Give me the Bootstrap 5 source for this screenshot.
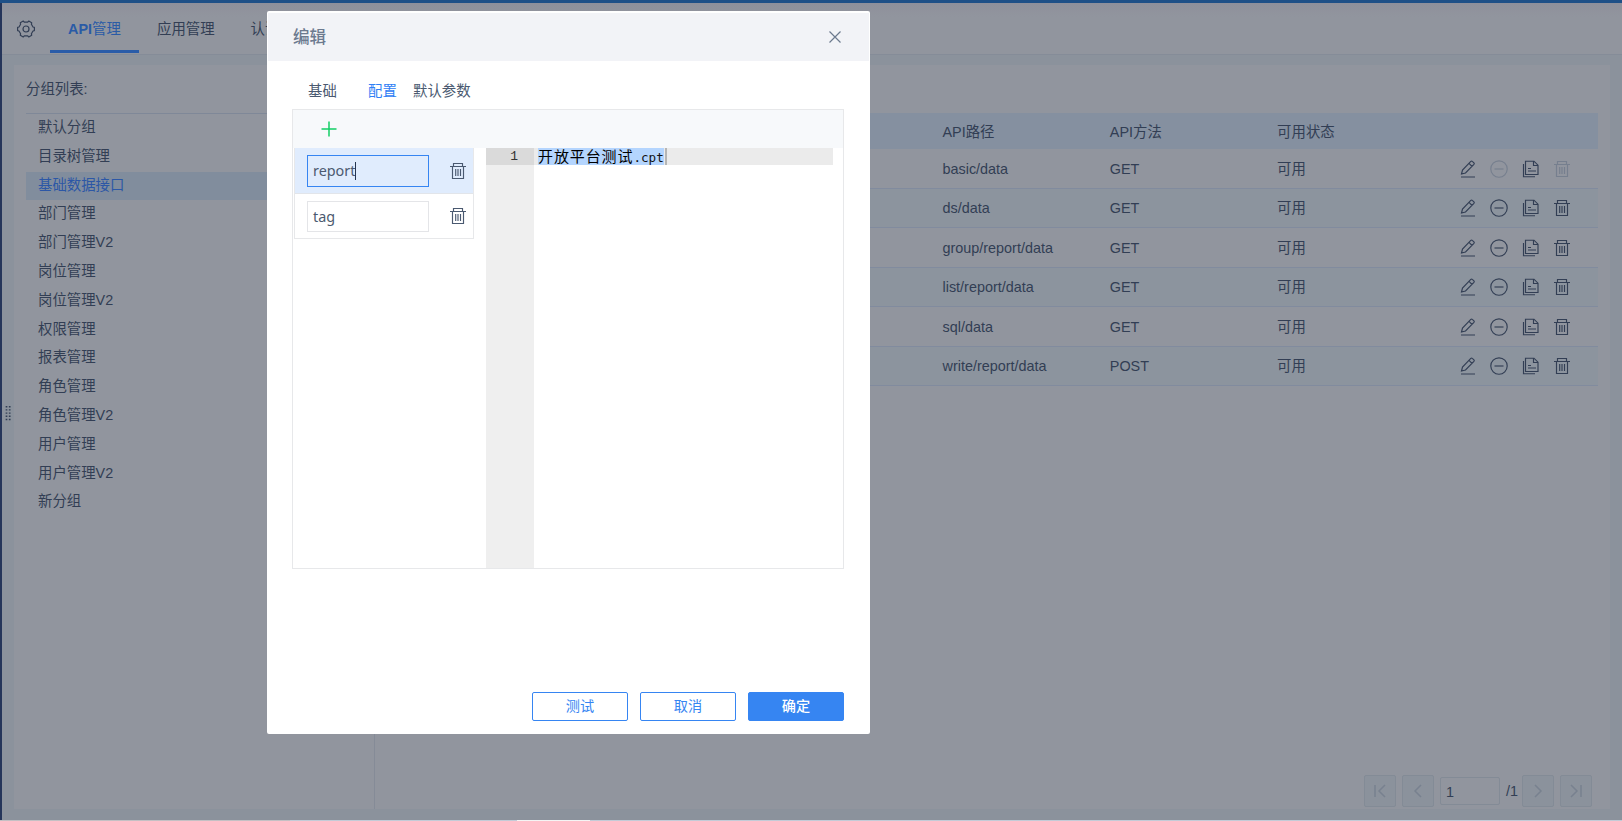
<!DOCTYPE html>
<html lang="zh-CN">
<head>
<meta charset="utf-8">
<title>API管理</title>
<link href="https://cdn.jsdelivr.net/npm/bootstrap@5.3.0/dist/css/bootstrap.min.css" rel="stylesheet">
<style>
:root{--ink:#323e54;--panel:#91959e;--page:#8b929c;--line:#818b9e;--blue:#3685f2}
body{font:14.4px/20px "Liberation Sans","Noto Sans CJK SC",sans-serif;color:var(--ink);background:var(--page);height:821px;overflow:hidden}
svg{display:block;fill:none;stroke:currentColor;flex:none}
.topline{height:3px;background:#1f5087}
.shell{height:817px;border-left:2px solid #25355a}
.topnav{height:52px;border-bottom:1px solid #858c98;background:linear-gradient(#8f909b,var(--panel) 14px);padding-left:15px}
.gear{margin:17px 15px 0 0}
.topnav a{color:var(--ink);text-decoration:none;height:50px;padding:16px 18px 0;white-space:nowrap}
.topnav a.on{color:#2a5ba6;border-bottom:3px solid #2a5ca8;width:89px}
.handle{width:12px;padding:0 0 38px 3px}
.panel{background:var(--panel);height:744px;margin-top:10px;width:1596px}
.side{width:361px;border-right:1px solid #858b97;padding-left:12px}
.side-title{height:49px;padding-top:14px;border-bottom:1px solid #7f8898;white-space:nowrap}
.side-item{height:28.8px;line-height:27.4px;padding-left:12px}
.side-item.on{background:#818d9d;color:#2c57a6}
.tbl{margin:48px 12px 0 12px}
.tr0{height:39.5px;border-bottom:1px solid var(--line);padding:1px 28px 0 555.5px}
.tr0:nth-child(odd){background:#8c949e}
.tr0.th0{height:36px;background:#8590a0;border:0;padding-top:2px}
.c1,.c2{width:167.3px}
.dim{color:#767f8e}
.ops{gap:14px}
.ops svg,.list0 svg{stroke-width:1.15}
.pager{gap:6px;padding:0 18px 2px 0;color:#78818f}
.pg{width:32px;height:32px;border:1px solid #838b96;background:#8b929c;border-radius:2px}
.pg-in{width:60px;height:28px;border:1px solid #838b96;border-radius:2px;color:var(--ink);padding:4px 5px}
.pg-n{color:var(--ink);width:12px;margin-right:-2px}
.foot{height:1px;background:linear-gradient(90deg,#c4c0c4 290px,#c3cbd7 290px 517px,#f4f4f4 517px 590px,#c3cbd7 590px)}
.dlg{position:absolute;left:267px;top:11px;width:603px;height:723px;background:#fff;border-radius:2px;color:#4a5970;padding:2px 1px 0 1px;font-family:"Noto Sans","Noto Sans CJK SC",sans-serif}
.dlg-head{height:48px;background:#f2f3f7;padding:0 28px 0 25px;font-size:16.6px;font-weight:500;color:#6c7a8f}
.dlg-head span{margin-top:-1px}
.tabs0{height:48px;padding:20px 0 0 40px}
.box0{width:552px;height:460px;margin-left:24px;border:1px solid #e7e8ea}
.bar0{height:38px;background:#f7f9fb;padding-left:28px}
.list0{width:180px;margin-left:1px;border:1px solid #e7e8ea;border-top:0;height:91px}
.li0{height:45px;padding:0 7px 1px 12px}
.li0.on{height:46px;padding:1px 7px 0 12px;background:#e0ecfd;border-bottom:1px solid #e2e5ea}
.inp{width:122px;height:31px;border:1px solid #e4e5e8;padding:5px;color:#4c5a70}
.li0.on .inp{border-color:var(--blue);height:32px}
.caret{display:inline-block;width:1px;height:18px;background:#24344f;vertical-align:-4px}
.ed{margin-left:12px;height:420px;font:13px/17px "Liberation Mono","Noto Sans CJK SC",monospace;color:#111}
.gut{width:48px;background:#efefef}
.gut div{background:#dadada;height:17px;text-align:right;padding-right:16px;color:#333}
.ln{width:299px;height:17px;background:#ebebeb;padding-left:4px}
.sel{background:#b4d5fe;height:17px;width:126px;white-space:nowrap;font-family:"DejaVu Sans Mono","Noto Sans CJK SC",monospace;font-size:12.6px;line-height:15px}
.sel span{font:15px/15px "Noto Sans CJK SC",sans-serif;letter-spacing:.9px;color:#000}
.cur{width:2px;background:#b5b5b5;margin-left:1px}
.acts{gap:12px;padding:123px 25px 0 0}
.b0{width:96px;height:29px;border-radius:2px;border:1px solid var(--blue);color:var(--blue);font-size:14.2px;line-height:20px;padding:2px 0 4px;background:#fff}
.b0.go{background:var(--blue);color:#fff;font-weight:500}
</style>
</head>
<body>
<svg width="0" height="0" class="position-absolute">
<symbol id="pen" viewBox="0 0 16 18"><path d="M1.500 14l1-4L10.800 1.400q.8-.7 1.500 0l1.600 1.500q.7.700 0 1.500L5.500 13zM9 3.400l3 3M1 17h14"/></symbol>
<symbol id="stop" viewBox="0 0 18 18"><circle cx="9" cy="9" r="8.200"/><path d="M4.500 9h9"/></symbol>
<symbol id="copy" viewBox="0 0 18 18"><path d="M3.500 1.200h8.500l4 4v9.300H3.500zM11.500 1.500v4h4.300M1.500 4v12.700h11.500M6 8.500h3M6 11h8"/></symbol>
<symbol id="bin" viewBox="0 0 16 18"><path d="M0 4.500h16M3.500 4.500v-3h9v3M2.500 4.500v12h11v-12M5.700 7v7M8 7v7M10.500 7v7"/></symbol>
</svg>
<div class="topline"></div>
<div class="shell">
  <nav class="topnav d-flex">
    <svg class="gear" width="18" height="18" viewBox="0 0 18 18" stroke-width="1.200"><circle cx="9" cy="9" r="3"/><path d="M6.200 1L7.300 2.200H10.700L11.800 1L14.700 2.700L14.400 4.300L16 7L17.400 7.400V10.600L16 11L14.400 13.700L14.700 15.300L11.800 17L10.700 15.800H7.300L6.200 17L3.300 15.300L3.600 13.700L2 11L.6 10.600V7.400L2 7L3.600 4.300L3.300 2.700Z" stroke-linejoin="round"/></svg>
    <a href="#" class="on"><b>API</b>管理</a><a href="#">应用管理</a><a href="#">认证管理</a>
  </nav>
  <div class="d-flex">
    <div class="handle d-flex align-items-center"><svg width="6" height="15" viewBox="0 0 6 15" stroke-dasharray="1.400 1.800" stroke-width="1.700"><path d="M1.500 0v15M4.700 0v15"/></svg></div>
    <div class="panel d-flex">
      <aside class="side">
        <div class="side-title">分组列表:</div>
        <div id="groups"></div>
      </aside>
      <main class="flex-grow-1 d-flex flex-column justify-content-between">
        <div class="tbl" id="rows">
          <div class="tr0 th0 d-flex align-items-center"><span class="c1">API路径</span><span class="c2">API方法</span><span>可用状态</span></div>
        </div>
        <div class="pager d-flex justify-content-end align-items-center">
          <div class="pg d-flex align-items-center justify-content-center"><svg width="14" height="14" stroke-width="1.500"><path d="M2 1v12M12 1L6 7l6 6"/></svg></div>
          <div class="pg d-flex align-items-center justify-content-center"><svg width="14" height="14" stroke-width="1.500"><path d="M10 1L4 7l6 6"/></svg></div>
          <div class="pg-in">1</div><span class="pg-n">/1</span>
          <div class="pg d-flex align-items-center justify-content-center"><svg width="14" height="14" stroke-width="1.500"><path d="M4 1l6 6-6 6"/></svg></div>
          <div class="pg d-flex align-items-center justify-content-center"><svg width="14" height="14" stroke-width="1.500"><path d="M12 1v12M2 1l6 6-6 6"/></svg></div>
        </div>
      </main>
    </div>
  </div>
</div>
<div class="foot"></div>

<section class="dlg">
  <div class="dlg-head d-flex align-items-center justify-content-between"><span>编辑</span><svg width="12" height="12" stroke-width="1.200"><path d="M.5.5l11 11M11.500.5l-11 11"/></svg></div>
  <div class="tabs0 d-flex"><span style="width:60px">基础</span><span style="width:45px;color:#2f80f5">配置</span><span>默认参数</span></div>
  <div class="box0">
    <div class="bar0 d-flex align-items-center"><svg width="16" height="16" stroke-width="1.500" style="color:#13ce66"><path d="M8 .5v15M.5 8h15"/></svg></div>
    <div class="d-flex">
      <div class="list0">
        <div class="li0 on d-flex align-items-center justify-content-between"><div class="inp">report<i class="caret"></i></div><svg width="16" height="18"><use href="#bin"/></svg></div>
        <div class="li0 d-flex align-items-center justify-content-between"><div class="inp">tag</div><svg width="16" height="18"><use href="#bin"/></svg></div>
      </div>
      <div class="ed d-flex">
        <div class="gut"><div>1</div></div>
        <div class="ln d-flex"><div class="sel"><span>开放平台测试</span>.cpt</div><div class="cur"></div></div>
      </div>
    </div>
  </div>
  <div class="acts d-flex justify-content-end"><button class="b0">测试</button><button class="b0">取消</button><button class="b0 go">确定</button></div>
</section>
<script src="https://cdn.jsdelivr.net/npm/bootstrap@5.3.0/dist/js/bootstrap.bundle.min.js"></script>
<script>
document.getElementById('groups').innerHTML='默认分组,目录树管理,基础数据接口,部门管理,部门管理V2,岗位管理,岗位管理V2,权限管理,报表管理,角色管理,角色管理V2,用户管理,用户管理V2,新分组'.split(',').map((t,i)=>`<div class="side-item${i==2?' on':''}">${t}</div>`).join('');
document.getElementById('rows').innerHTML+=[['basic/data','GET'],['ds/data','GET'],['group/report/data','GET'],['list/report/data','GET'],['sql/data','GET'],['write/report/data','POST']].map((r,i)=>{
  const d=i?'':' class="dim"';
  return `<div class="tr0 d-flex align-items-center"><span class="c1">${r[0]}</span><span class="c2">${r[1]}</span><span>可用</span><div class="ops d-flex ms-auto"><svg width="16" height="18"><use href="#pen"/></svg><svg width="18" height="18"${d}><use href="#stop"/></svg><svg width="18" height="18"><use href="#copy"/></svg><svg width="16" height="18"${d}><use href="#bin"/></svg></div></div>`}).join('');
</script>
</body>
</html>
